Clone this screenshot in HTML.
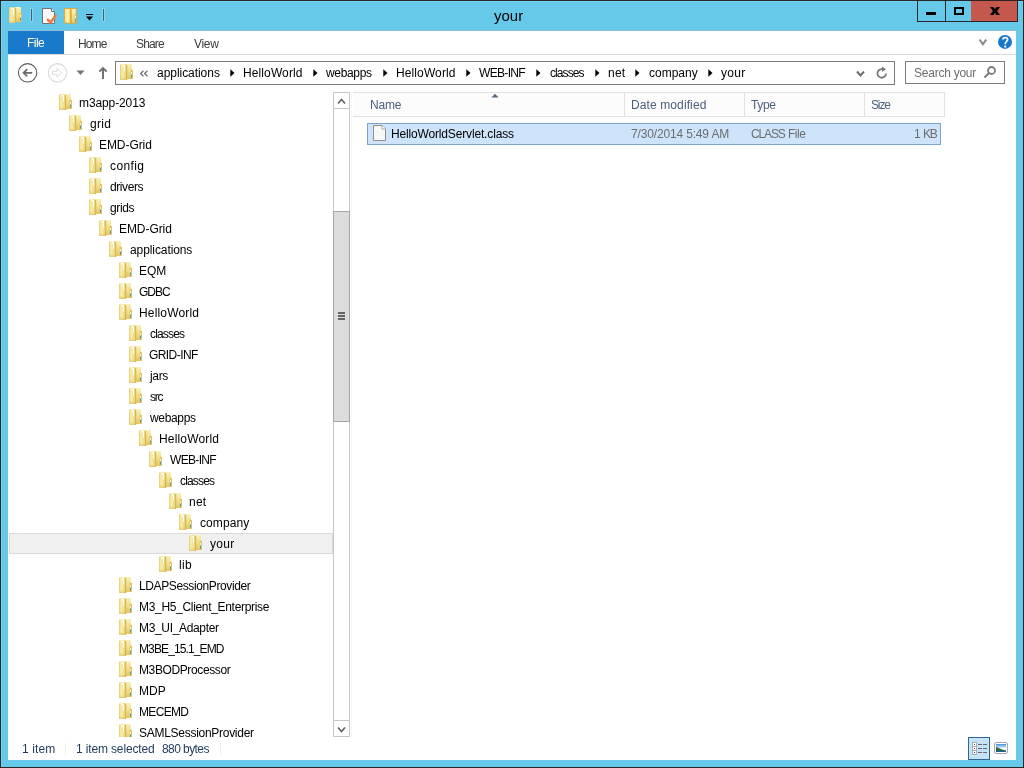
<!DOCTYPE html>
<html><head><meta charset="utf-8">
<style>
*{box-sizing:border-box}
html,body{margin:0;padding:0}
body{width:1024px;height:768px;position:relative;overflow:hidden;background:#66C9E9;font-family:"Liberation Sans", sans-serif;font-size:12px;color:#000}
.a{position:absolute}
.ic{position:absolute;overflow:visible}
.t{position:absolute;white-space:pre;line-height:16px;font-size:12px}
</style></head><body>
<svg width="0" height="0" style="position:absolute">
<defs>
<linearGradient id="fb" x1="0" y1="0" x2="0" y2="1"><stop offset="0" stop-color="#FAF1B8"/><stop offset="0.55" stop-color="#F1DD8A"/><stop offset="1" stop-color="#E5C662"/></linearGradient>
<linearGradient id="ff" x1="0" y1="0" x2="1" y2="0"><stop offset="0" stop-color="#E2C35C"/><stop offset="0.15" stop-color="#F4E49C"/><stop offset="0.4" stop-color="#F8EDA8"/><stop offset="0.8" stop-color="#EFDA86"/><stop offset="1" stop-color="#E3C664"/></linearGradient>
<linearGradient id="fv" x1="0" y1="0" x2="0" y2="1"><stop offset="0" stop-color="#FFFFFF" stop-opacity="0"/><stop offset="0.8" stop-color="#E0C062" stop-opacity="0"/><stop offset="1" stop-color="#D8B656" stop-opacity="0.6"/></linearGradient>
<symbol id="fold" viewBox="0 0 13 16">
<rect x="5.5" y="0" width="6.5" height="15" rx="1" fill="url(#fb)"/>
<rect x="10.7" y="5.8" width="2.3" height="9.2" rx="0.8" fill="#E2C259"/>
<rect x="11" y="8" width="1" height="2.6" fill="#EEF3F5"/>
<rect x="11" y="10.6" width="1" height="3" fill="#3B9ADA"/>
<path d="M0 1.4 Q0 0.3 1.1 0.3 H5.6 Q6.7 0.3 6.7 1.4 V16 H1.1 Q0 16 0 14.9 Z" fill="url(#ff)"/>
<path d="M0 1.4 Q0 0.3 1.1 0.3 H5.6 Q6.7 0.3 6.7 1.4 V16 H1.1 Q0 16 0 14.9 Z" fill="url(#fv)"/>
<rect x="6.1" y="1" width="1.1" height="15" fill="#D5B657"/>
<path d="M2 2.6 L3.4 1 H5 V7.4 H4 V2.6 Z" fill="#FFFFFF"/>
</symbol>
<linearGradient id="gb" x1="0" y1="0" x2="0" y2="1"><stop offset="0" stop-color="#FDF6C6"/><stop offset="0.6" stop-color="#F2DC88"/><stop offset="1" stop-color="#EACB66"/></linearGradient>
<linearGradient id="gf" x1="0" y1="0" x2="1" y2="0"><stop offset="0" stop-color="#F6E592"/><stop offset="0.5" stop-color="#FAF0A6"/><stop offset="1" stop-color="#EEDA84"/></linearGradient>
<symbol id="fold2" viewBox="0 0 13 16">
<rect x="5.6" y="0.5" width="6.6" height="14.6" fill="url(#gb)" stroke="#E6A52C" stroke-width="0.9"/>
<rect x="11.6" y="5.8" width="1.4" height="9" fill="#E9A62C"/>
<rect x="11" y="8" width="1" height="2.6" fill="#F2F6F8"/>
<rect x="11" y="10.6" width="1" height="2.8" fill="#4C9FD8"/>
<path d="M0.45 0.45 H6.6 V15.6 L0.45 14.7 Z" fill="url(#gf)" stroke="#E5A126" stroke-width="0.9"/>
<rect x="6.4" y="1.2" width="1.3" height="14.2" fill="#C9A448" opacity="0.75"/>
</symbol>
</defs></svg>
<div class="a" style="left:0;top:0;width:1024px;height:768px;will-change:transform">
<div class="a" style="left:0;top:0;width:1024px;height:768px;border:1px solid #2B2526"></div>
<div class="a" style="left:1px;top:1px;width:1px;height:766px;background:#6DD3F3"></div>
<div class="a" style="left:1px;top:1px;width:1022px;height:1px;background:#6DD3F3"></div>
<svg class="ic" style="left:9px;top:7px" width="13" height="16"><use href="#fold"/></svg>
<div class="a" style="left:30px;top:8px;width:3px;height:14px;background:#86D6F0;border-radius:1px"></div>
<div class="a" style="left:31px;top:9px;width:1px;height:12px;background:#42606C"></div>
<svg class="ic" style="left:42px;top:8px" width="16" height="16" viewBox="0 0 16 16">
<path d="M0.5 0.5 H9.5 L12.5 3.5 V15.5 H0.5 Z" fill="#F9F9F9" stroke="#707272"/>
<path d="M9.5 0.5 V3.5 H12.5" fill="#FFFFFF" stroke="#707272"/>
<path d="M5.8 11.8 L8.6 14.4 L13.6 7.8" fill="none" stroke="#EC7B45" stroke-width="2.6" stroke-linecap="round" stroke-linejoin="round"/>
</svg>
<svg class="ic" style="left:64px;top:8px" width="13" height="16"><use href="#fold2"/></svg>
<svg class="ic" style="left:86px;top:14px" width="7" height="7" viewBox="0 0 7 7">
<rect x="0" y="0" width="7" height="1" fill="#000"/><path d="M0 2.5 H7 L3.5 6.5 Z" fill="#000"/></svg>
<div class="a" style="left:102px;top:8px;width:3px;height:14px;background:#86D6F0;border-radius:1px"></div>
<div class="a" style="left:103px;top:9px;width:1px;height:12px;background:#42606C"></div>
<div class="a" style="left:494px;top:6px;font-size:15px;line-height:20px;color:#000">your</div>
<div class="a" style="left:917px;top:0;width:101px;height:22px;background:#2B2526"></div>
<div class="a" style="left:918px;top:1px;width:27px;height:20px;background:#66C9E9"></div>
<div class="a" style="left:946px;top:1px;width:25px;height:20px;background:#66C9E9"></div>
<div class="a" style="left:971px;top:1px;width:46px;height:20px;background:#C5584D"></div>
<div class="a" style="left:926px;top:12px;width:10px;height:3px;background:#000"></div>
<div class="a" style="left:954px;top:7px;width:10px;height:8px;border:2px solid #000"></div>
<svg class="ic" style="left:989px;top:6px" width="12" height="10" viewBox="0 0 12 10">
<path d="M1 1 H4.6 L6 3.3 L7.4 1 H11 L8.1 5 L11 9 H7.4 L6 6.7 L4.6 9 H1 L3.9 5 Z" fill="#000"/></svg>
<div class="a" style="left:8px;top:30px;width:1008px;height:730px;background:#FFFFFF"></div>
<div class="a" style="left:8px;top:30px;width:1008px;height:1px;background:#8CBFD6"></div>
<div class="a" style="left:8px;top:31px;width:56px;height:23px;background:#1979CA"></div>
<div class="t" style="left:27px;top:35px;letter-spacing:-0.533px;color:#FFFFFF">File</div>
<div class="t" style="left:78px;top:36px;letter-spacing:-0.900px;color:#3B3B3B">Home</div>
<div class="t" style="left:136px;top:36px;letter-spacing:-0.850px;color:#3B3B3B">Share</div>
<div class="t" style="left:194px;top:36px;letter-spacing:-0.333px;color:#3B3B3B">View</div>
<div class="a" style="left:8px;top:54px;width:1008px;height:1px;background:#DADBDC"></div>
<svg class="ic" style="left:978px;top:38px" width="10" height="9" viewBox="0 0 10 9">
<path d="M1.6 1.6 L4.9 6.3 L8.2 1.6" fill="none" stroke="#8A8A8A" stroke-width="2"/></svg>
<svg class="ic" style="left:998px;top:35px" width="14" height="14" viewBox="0 0 14 14">
<circle cx="7" cy="6.9" r="7" fill="#1A78CC"/>
<path d="M4.9 4.6 C4.9 2.2 9.6 2.0 9.6 4.4 C9.6 6.2 7.3 6.4 7.2 9.2" fill="none" stroke="#fff" stroke-width="1.7"/>
<rect x="6.3" y="10.6" width="1.9" height="1.9" fill="#fff"/></svg>
<svg class="ic" style="left:17px;top:62px" width="22" height="22" viewBox="0 0 22 22">
<circle cx="10.6" cy="10.8" r="9.2" fill="none" stroke="#5B5B5B" stroke-width="1.1"/>
<path d="M6.6 10.8 H15.2 M10.2 7.2 L6.6 10.8 L10.2 14.4" fill="none" stroke="#6B6B6B" stroke-width="1.8"/></svg>
<svg class="ic" style="left:47px;top:62px" width="22" height="22" viewBox="0 0 22 22">
<circle cx="10.5" cy="10.8" r="9.2" fill="none" stroke="#D8D8D8" stroke-width="1.1"/>
<path d="M5.5 9.3 H10 V6.5 L14.5 10.8 L10 15.1 V12.3 H5.5 Z" fill="none" stroke="#DADADA" stroke-width="1"/></svg>
<svg class="ic" style="left:76px;top:70px" width="9" height="6" viewBox="0 0 9 6">
<path d="M0.5 0.5 H8.5 L4.5 5 Z" fill="#727272"/></svg>
<svg class="ic" style="left:98px;top:66px" width="10" height="14" viewBox="0 0 10 14">
<path d="M5 2 V13 M1.3 5.7 L5 2 L8.7 5.7" fill="none" stroke="#6E6E6E" stroke-width="1.9"/></svg>
<div class="a" style="left:115px;top:61px;width:780px;height:24px;border:1px solid #7A7A7A"></div>
<svg class="ic" style="left:120px;top:64px" width="13" height="16"><use href="#fold"/></svg>
<svg class="ic" style="left:139px;top:70px" width="10" height="7" viewBox="0 0 10 7"><path d="M4.5 0.8 L1.6 3.5 L4.5 6.2 M8.5 0.8 L5.6 3.5 L8.5 6.2" fill="none" stroke="#707070" stroke-width="1.3"/></svg>
<div class="t" style="left:157px;top:65px;letter-spacing:-0.045px">applications</div>
<div class="t" style="left:243px;top:65px;letter-spacing:0.111px">HelloWorld</div>
<div class="t" style="left:326px;top:65px;letter-spacing:-0.333px">webapps</div>
<div class="t" style="left:396px;top:65px;letter-spacing:0.111px">HelloWorld</div>
<div class="t" style="left:479px;top:65px;letter-spacing:-0.667px">WEB-INF</div>
<div class="t" style="left:550px;top:65px;letter-spacing:-0.917px">classes</div>
<div class="t" style="left:608px;top:65px;letter-spacing:0.250px">net</div>
<div class="t" style="left:649px;top:65px">company</div>
<div class="t" style="left:721px;top:65px;letter-spacing:0.333px">your</div>
<svg class="ic" style="left:230px;top:69px" width="5" height="8" viewBox="0 0 5 8"><path d="M0.3 0.3 L4.5 4 L0.3 7.7 Z" fill="#000"/></svg>
<svg class="ic" style="left:313px;top:69px" width="5" height="8" viewBox="0 0 5 8"><path d="M0.3 0.3 L4.5 4 L0.3 7.7 Z" fill="#000"/></svg>
<svg class="ic" style="left:383px;top:69px" width="5" height="8" viewBox="0 0 5 8"><path d="M0.3 0.3 L4.5 4 L0.3 7.7 Z" fill="#000"/></svg>
<svg class="ic" style="left:466px;top:69px" width="5" height="8" viewBox="0 0 5 8"><path d="M0.3 0.3 L4.5 4 L0.3 7.7 Z" fill="#000"/></svg>
<svg class="ic" style="left:536px;top:69px" width="5" height="8" viewBox="0 0 5 8"><path d="M0.3 0.3 L4.5 4 L0.3 7.7 Z" fill="#000"/></svg>
<svg class="ic" style="left:595px;top:69px" width="5" height="8" viewBox="0 0 5 8"><path d="M0.3 0.3 L4.5 4 L0.3 7.7 Z" fill="#000"/></svg>
<svg class="ic" style="left:635px;top:69px" width="5" height="8" viewBox="0 0 5 8"><path d="M0.3 0.3 L4.5 4 L0.3 7.7 Z" fill="#000"/></svg>
<svg class="ic" style="left:708px;top:69px" width="5" height="8" viewBox="0 0 5 8"><path d="M0.3 0.3 L4.5 4 L0.3 7.7 Z" fill="#000"/></svg>
<svg class="ic" style="left:856px;top:70px" width="9" height="8" viewBox="0 0 9 8">
<path d="M1 1.5 L4.5 5.5 L8 1.5" fill="none" stroke="#6E6E6E" stroke-width="2"/></svg>
<svg class="ic" style="left:875px;top:66px" width="14" height="14" viewBox="0 0 14 14">
<path d="M11 7.5 A4.3 4.3 0 1 1 8.2 3.4" fill="none" stroke="#777" stroke-width="1.8"/>
<path d="M7 0.5 L11 3.3 L7 6 Z" fill="#777"/></svg>
<div class="a" style="left:905px;top:61px;width:100px;height:23px;border:1px solid #7A7A7A"></div>
<div class="t" style="left:914px;top:65px;letter-spacing:-0.240px;color:#6D6D6D">Search your</div>
<svg class="ic" style="left:983px;top:65px" width="13" height="14" viewBox="0 0 13 14">
<circle cx="8.5" cy="5.5" r="3.5" fill="none" stroke="#7B7B7B" stroke-width="1.8"/>
<path d="M6 8 L1.5 12.5" stroke="#7B7B7B" stroke-width="2"/></svg>
<div class="a" style="left:8px;top:92px;width:325px;height:645px;overflow:hidden">
 <div class="a" style="left:1px;top:441px;width:324px;height:21px;background:#F0F0F0;border:1px solid #DADADA"></div>
 <div class="a" style="left:-8px;top:-92px;width:400px;height:1000px">
<svg class="ic" style="left:59px;top:94px" width="13" height="16"><use href="#fold"/></svg>
<div class="t" style="left:79px;top:95px;letter-spacing:-0.111px">m3app-2013</div>
<svg class="ic" style="left:69px;top:115px" width="13" height="16"><use href="#fold"/></svg>
<div class="t" style="left:90px;top:116px;letter-spacing:0.333px">grid</div>
<svg class="ic" style="left:79px;top:136px" width="13" height="16"><use href="#fold"/></svg>
<div class="t" style="left:99px;top:137px;letter-spacing:-0.071px">EMD-Grid</div>
<svg class="ic" style="left:89px;top:157px" width="13" height="16"><use href="#fold"/></svg>
<div class="t" style="left:110px;top:158px;letter-spacing:0.400px">config</div>
<svg class="ic" style="left:89px;top:178px" width="13" height="16"><use href="#fold"/></svg>
<div class="t" style="left:110px;top:179px;letter-spacing:-0.417px">drivers</div>
<svg class="ic" style="left:89px;top:199px" width="13" height="16"><use href="#fold"/></svg>
<div class="t" style="left:110px;top:200px;letter-spacing:-0.350px">grids</div>
<svg class="ic" style="left:99px;top:220px" width="13" height="16"><use href="#fold"/></svg>
<div class="t" style="left:119px;top:221px;letter-spacing:-0.071px">EMD-Grid</div>
<svg class="ic" style="left:109px;top:241px" width="13" height="16"><use href="#fold"/></svg>
<div class="t" style="left:130px;top:242px;letter-spacing:-0.091px">applications</div>
<svg class="ic" style="left:119px;top:262px" width="13" height="16"><use href="#fold"/></svg>
<div class="t" style="left:139px;top:263px">EQM</div>
<svg class="ic" style="left:119px;top:283px" width="13" height="16"><use href="#fold"/></svg>
<div class="t" style="left:139px;top:284px;letter-spacing:-1.000px">GDBC</div>
<svg class="ic" style="left:119px;top:304px" width="13" height="16"><use href="#fold"/></svg>
<div class="t" style="left:139px;top:305px;letter-spacing:0.167px">HelloWorld</div>
<svg class="ic" style="left:129px;top:325px" width="13" height="16"><use href="#fold"/></svg>
<div class="t" style="left:150px;top:326px;letter-spacing:-0.833px">classes</div>
<svg class="ic" style="left:129px;top:346px" width="13" height="16"><use href="#fold"/></svg>
<div class="t" style="left:149px;top:347px;letter-spacing:-0.571px">GRID-INF</div>
<svg class="ic" style="left:129px;top:367px" width="13" height="16"><use href="#fold"/></svg>
<div class="t" style="left:150px;top:368px;letter-spacing:-0.333px">jars</div>
<svg class="ic" style="left:129px;top:388px" width="13" height="16"><use href="#fold"/></svg>
<div class="t" style="left:150px;top:389px;letter-spacing:-1.200px">src</div>
<svg class="ic" style="left:129px;top:409px" width="13" height="16"><use href="#fold"/></svg>
<div class="t" style="left:150px;top:410px;letter-spacing:-0.333px">webapps</div>
<svg class="ic" style="left:139px;top:430px" width="13" height="16"><use href="#fold"/></svg>
<div class="t" style="left:159px;top:431px;letter-spacing:0.167px">HelloWorld</div>
<svg class="ic" style="left:149px;top:451px" width="13" height="16"><use href="#fold"/></svg>
<div class="t" style="left:170px;top:452px;letter-spacing:-0.667px">WEB-INF</div>
<svg class="ic" style="left:159px;top:472px" width="13" height="16"><use href="#fold"/></svg>
<div class="t" style="left:180px;top:473px;letter-spacing:-0.833px">classes</div>
<svg class="ic" style="left:169px;top:493px" width="13" height="16"><use href="#fold"/></svg>
<div class="t" style="left:189px;top:494px;letter-spacing:0.250px">net</div>
<svg class="ic" style="left:179px;top:514px" width="13" height="16"><use href="#fold"/></svg>
<div class="t" style="left:200px;top:515px;letter-spacing:0.100px">company</div>
<svg class="ic" style="left:189px;top:535px" width="13" height="16"><use href="#fold"/></svg>
<div class="t" style="left:210px;top:536px;letter-spacing:0.333px">your</div>
<svg class="ic" style="left:159px;top:556px" width="13" height="16"><use href="#fold"/></svg>
<div class="t" style="left:179px;top:557px;letter-spacing:0.300px">lib</div>
<svg class="ic" style="left:119px;top:577px" width="13" height="16"><use href="#fold"/></svg>
<div class="t" style="left:139px;top:578px;letter-spacing:-0.389px">LDAPSessionProvider</div>
<svg class="ic" style="left:119px;top:598px" width="13" height="16"><use href="#fold"/></svg>
<div class="t" style="left:139px;top:599px;letter-spacing:-0.318px">M3_H5_Client_Enterprise</div>
<svg class="ic" style="left:119px;top:619px" width="13" height="16"><use href="#fold"/></svg>
<div class="t" style="left:139px;top:620px;letter-spacing:-0.333px">M3_UI_Adapter</div>
<svg class="ic" style="left:119px;top:640px" width="13" height="16"><use href="#fold"/></svg>
<div class="t" style="left:139px;top:641px;letter-spacing:-0.883px">M3BE_15.1_EMD</div>
<svg class="ic" style="left:119px;top:661px" width="13" height="16"><use href="#fold"/></svg>
<div class="t" style="left:139px;top:662px;letter-spacing:-0.385px">M3BODProcessor</div>
<svg class="ic" style="left:119px;top:682px" width="13" height="16"><use href="#fold"/></svg>
<div class="t" style="left:139px;top:683px">MDP</div>
<svg class="ic" style="left:119px;top:703px" width="13" height="16"><use href="#fold"/></svg>
<div class="t" style="left:139px;top:704px;letter-spacing:-0.680px">MECEMD</div>
<svg class="ic" style="left:119px;top:724px" width="13" height="16"><use href="#fold"/></svg>
<div class="t" style="left:139px;top:725px;letter-spacing:-0.278px">SAMLSessionProvider</div>
 </div>
</div>
<div class="a" style="left:333px;top:92px;width:17px;height:645px;border:1px solid #C8C8C8;background:#fff"></div>
<div class="a" style="left:333px;top:108px;width:17px;height:1px;background:#C8C8C8"></div>
<div class="a" style="left:333px;top:720px;width:17px;height:1px;background:#C8C8C8"></div>
<svg class="ic" style="left:336px;top:96px" width="12" height="10" viewBox="0 0 12 10">
<path d="M2 7.5 L5.5 3.5 L9 7.5" fill="none" stroke="#606060" stroke-width="1.6"/></svg>
<svg class="ic" style="left:336px;top:725px" width="12" height="10" viewBox="0 0 12 10">
<path d="M2 2.5 L5.5 6.5 L9 2.5" fill="none" stroke="#606060" stroke-width="1.6"/></svg>
<div class="a" style="left:333px;top:211px;width:17px;height:211px;border:1px solid #A6A6A6;background:#DCDCDC"></div>
<div class="a" style="left:338px;top:312px;width:7px;height:2px;background:#656565"></div>
<div class="a" style="left:338px;top:315px;width:7px;height:2px;background:#656565"></div>
<div class="a" style="left:338px;top:318px;width:7px;height:2px;background:#656565"></div>
<div class="a" style="left:351px;top:93px;width:1px;height:645px;background:#F6F6F6"></div>
<div class="a" style="left:353px;top:92px;width:592px;height:25px;border:1px solid #E2E2E2;border-left:none;background:#FCFCFC"></div>
<div class="a" style="left:624px;top:93px;width:1px;height:23px;background:#E2E2E2"></div>
<div class="a" style="left:744px;top:93px;width:1px;height:23px;background:#E2E2E2"></div>
<div class="a" style="left:864px;top:93px;width:1px;height:23px;background:#E2E2E2"></div>
<svg class="ic" style="left:491px;top:93px" width="8" height="5" viewBox="0 0 8 5">
<path d="M0.5 4.5 L4 0.8 L7.5 4.5 Z" fill="#56687F"/></svg>
<div class="t" style="left:370px;top:97px;letter-spacing:-0.167px;color:#4C607A">Name</div>
<div class="t" style="left:631px;top:97px;letter-spacing:0.108px;color:#4C607A">Date modified</div>
<div class="t" style="left:751px;top:97px;letter-spacing:-0.333px;color:#4C607A">Type</div>
<div class="t" style="left:871px;top:97px;letter-spacing:-1.133px;color:#4C607A">Size</div>
<div class="a" style="left:367px;top:123px;width:574px;height:22px;border:1px solid #7DA2CE;background:#CDE4FB"></div>
<svg class="ic" style="left:373px;top:125px" width="13" height="16" viewBox="0 0 13 16">
<path d="M0.5 0.5 H9 L12.5 4 V15.5 H0.5 Z" fill="#F8F8F8" stroke="#8F8F8F"/>
<path d="M9 0.5 V4 H12.5" fill="#fff" stroke="#A8A8A8"/></svg>
<div class="t" style="left:391px;top:126px;letter-spacing:-0.159px">HelloWorldServlet.class</div>
<div class="t" style="left:631px;top:126px;letter-spacing:-0.156px;color:#6D6D6D">7/30/2014 5:49 AM</div>
<div class="t" style="left:751px;top:126px;letter-spacing:-1.150px;color:#6D6D6D">CLASS</div>
<div class="t" style="left:788px;top:126px;letter-spacing:-0.467px;color:#6D6D6D">File</div>
<div class="t" style="left:914px;top:126px;color:#6D6D6D">1</div>
<div class="t" style="left:923px;top:126px;letter-spacing:-1.200px;color:#6D6D6D">KB</div>
<div class="t" style="left:22px;top:741px;letter-spacing:0.120px;color:#1E395B">1 item</div>
<div class="a" style="left:65px;top:743px;width:1px;height:12px;background:#EDEDED"></div>
<div class="t" style="left:76px;top:741px;letter-spacing:-0.143px;color:#1E395B">1 item selected</div>
<div class="t" style="left:162px;top:741px;letter-spacing:-0.575px;color:#1E395B">880 bytes</div>
<div class="a" style="left:220px;top:743px;width:1px;height:12px;background:#EDEDED"></div>
<div class="a" style="left:968px;top:737px;width:22px;height:23px;border:1px solid #2F6596;background:#C6E2F6"></div>
<svg class="ic" style="left:972px;top:742px" width="16" height="14" viewBox="0 0 16 14">
<rect x="0.5" y="0.5" width="4" height="4" fill="#fff" stroke="#A0A0A0" stroke-width="0.8"/>
<rect x="0.5" y="4.5" width="4" height="4" fill="#fff" stroke="#A0A0A0" stroke-width="0.8"/>
<rect x="0.5" y="8.5" width="4" height="4" fill="#fff" stroke="#A0A0A0" stroke-width="0.8"/>
<rect x="2" y="2" width="1" height="1" fill="#3A8A3A"/><rect x="2" y="6" width="1" height="1" fill="#D02020"/><rect x="2" y="10" width="1" height="1" fill="#2050C0"/>
<rect x="6" y="2" width="4" height="1" fill="#666"/><rect x="11" y="2" width="4" height="1" fill="#666"/>
<rect x="6" y="6" width="4" height="1" fill="#666"/><rect x="11" y="6" width="4" height="1" fill="#666"/>
<rect x="6" y="10" width="4" height="1" fill="#666"/><rect x="11" y="10" width="4" height="1" fill="#666"/>
</svg>
<svg class="ic" style="left:994px;top:742px" width="14" height="12" viewBox="0 0 14 12">
<defs><linearGradient id="sky" x1="0" y1="0" x2="0" y2="1"><stop offset="0" stop-color="#3B8EE0"/><stop offset="0.55" stop-color="#F2FAFF"/><stop offset="1" stop-color="#CFE8F0"/></linearGradient></defs>
<rect x="0.5" y="0.5" width="13" height="11" rx="1.5" fill="#fff" stroke="#9FA8B4"/>
<rect x="2" y="2" width="10" height="8" fill="url(#sky)"/>
<path d="M2 4.5 C3.5 5.5 5.5 7 12 8.6 V10 H2 Z" fill="#2E6B3A"/>
<rect x="2" y="9" width="10" height="1" fill="#2458A8"/>
</svg>
</div>
</body></html>
